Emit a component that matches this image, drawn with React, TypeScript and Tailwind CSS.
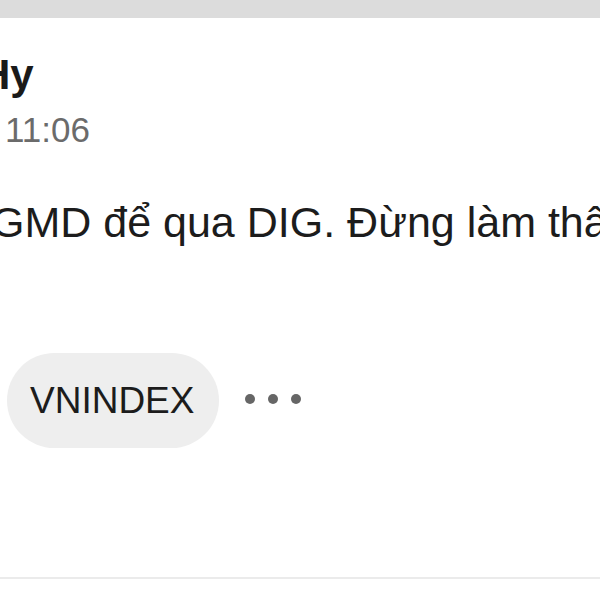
import React from "react";

export default function App() {
  return (
    <div
      className="w-[600px] h-[600px] overflow-hidden bg-white flex flex-col"
      style={{ fontFamily: '"Liberation Sans", Arial, sans-serif' }}
    >
      <div className="h-[18px] w-full bg-[#dcdcdc] shrink-0" />
      <div className="flex flex-col pt-[33px]">
        <div className="ml-[-20px] text-[42px] leading-[48px] font-bold text-[#1a1a1a] whitespace-nowrap">
          Hy
        </div>
        <div className="ml-[5px] mt-[10px] text-[35px] leading-[42px] text-[#6b6b6b] whitespace-nowrap">
          11:06
        </div>
        <div className="ml-[-9px] mt-[45px] text-[43px] leading-[52px] text-[#1c1c1c] whitespace-nowrap">
          GMD để qua DIG. Đừng làm thân với nó
        </div>
        <div className="mt-[105px] flex items-center">
          <div className="ml-[7px] h-[95px] pl-[23px] pr-[25px] rounded-full bg-[#eeeeee] flex items-center text-[37px] text-[#1c1c1c] whitespace-nowrap">
            VNINDEX
          </div>
          <div className="ml-[26px] mb-[3px] flex items-center gap-[13px]">
            <span className="block w-[10px] h-[10px] rounded-full bg-[#666666]" />
            <span className="block w-[10px] h-[10px] rounded-full bg-[#666666]" />
            <span className="block w-[10px] h-[10px] rounded-full bg-[#666666]" />
          </div>
        </div>
        <div className="mt-[129px] h-[2px] w-full bg-[#ebebeb]" />
      </div>
    </div>
  );
}
